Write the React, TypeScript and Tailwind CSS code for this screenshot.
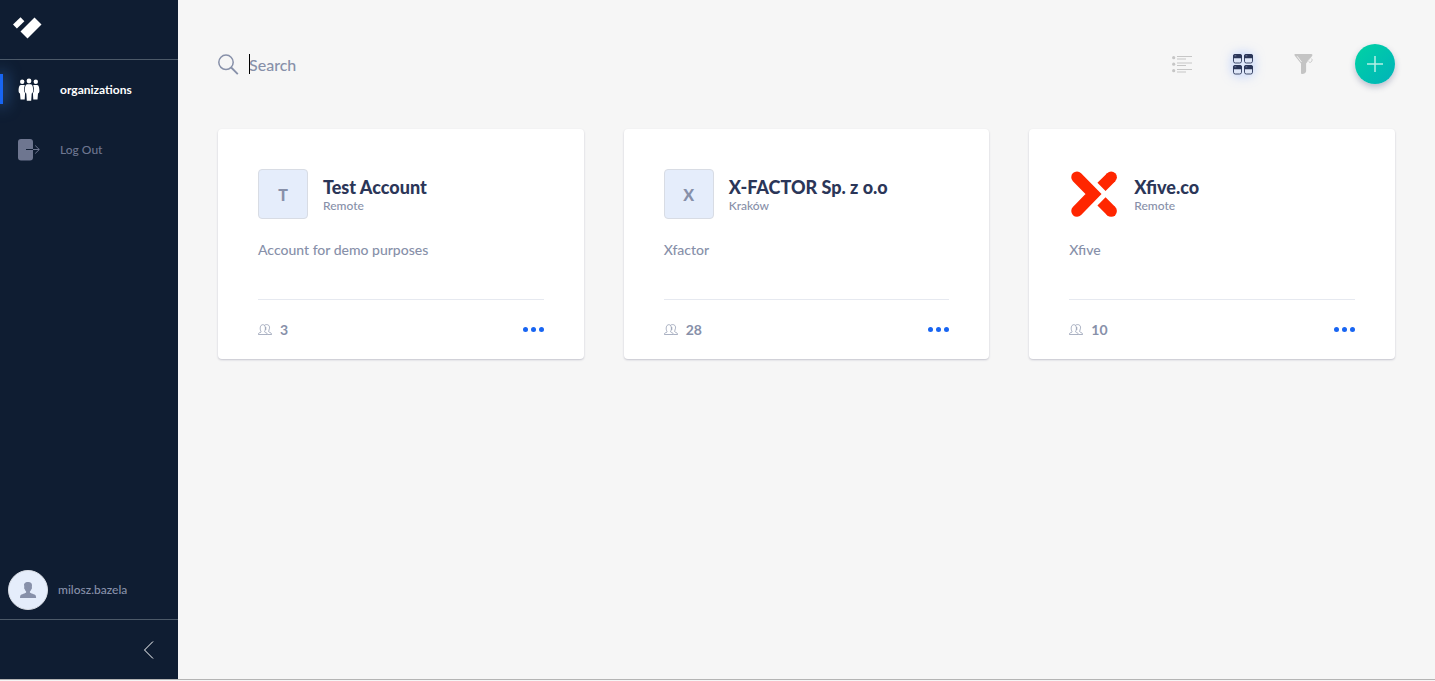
import type { ReactNode } from "react";

type Organization = {
  name: string;
  location: string;
  description: string;
  members: number;
  logo?: ReactNode;
};

function BrandIcon() {
  return (
    <svg width="30" height="24" viewBox="0 0 30 24" fill="#fff" aria-hidden="true">
      <path d="M1 8.500 8.500 1.300l3.900 3.900-7.500 7.200z" />
      <path d="M8.500 15.500 22.500 1.500l7 7L15.500 22.500z" />
    </svg>
  );
}

function PeopleIcon() {
  return (
    <svg width="22" height="24" viewBox="0 0 22 24" fill="currentColor" aria-hidden="true">
      <circle cx="4.200" cy="3.800" r="2.200" />
      <circle cx="17.800" cy="3.800" r="2.200" />
      <circle cx="11" cy="3" r="2.400" />
      <path d="M2.800 6.900h3.500c.4 0 .6.200.5.600-.8 1.800-.9 4.500-.4 6.400.2.500.5.700.7 1l-.4 6.700H2.500L2 15.500C.8 15 .5 13.700.6 12.300c.1-2.600.6-5.400 2.200-5.400z" />
      <path d="M19.200 6.900h-3.500c-.4 0-.6.200-.5.600.8 1.800.9 4.500.4 6.400-.2.500-.5.700-.7 1l.4 6.700h4.200l.5-6.100c1.200-.5 1.500-1.800 1.400-3.200-.1-2.600-.6-5.400-2.200-5.400z" />
      <path d="M9.300 6.200h3.400c1.900 0 2.500 3.600 2.500 6 0 1.500-.5 2.800-1.500 3.300l-.5 7.200H8.800l-.5-7.200c-1-.5-1.500-1.800-1.500-3.300 0-2.400.6-6 2.500-6z" />
    </svg>
  );
}

function LogOutIcon() {
  return (
    <svg width="22" height="22" viewBox="0 0 22 22" fill="none" aria-hidden="true">
      <rect width="15" height="21.500" rx="3" fill="#6e7690" />
      <path d="M8 10.500h7.500" stroke="#0f1d32" strokeWidth="1" />
      <path d="M15 10.500h6.200M17.200 6.500l4.100 4-4.100 4" stroke="#6e7690" strokeWidth="1" />
    </svg>
  );
}

function UserIcon() {
  return (
    <svg width="18" height="18" viewBox="0 0 18 18" fill="#8790a9" aria-hidden="true">
      <path d="M5 3.200C5.700 1.500 7.200 1 9 1c2.500-.2 4.200 1.200 4 3.500l-.2 1.700c.5.500.1 1.600-.4 2-.3 1-.9 1.700-1.500 2.200v1.200c.2.700 5.200 1.700 5.800 2.900.3.700.4 1.600.4 2.500H1c0-.9.100-1.800.4-2.500.6-1.200 5.500-2.200 5.700-2.900v-1.200C6.500 9.900 6 9.200 5.700 8.200c-.5-.4-.9-1.500-.4-2z" />
    </svg>
  );
}

function ChevronIcon() {
  return (
    <svg width="11" height="20" viewBox="0 0 11 20" fill="none" stroke="#fff" strokeWidth="1" aria-hidden="true">
      <path d="M10 1.500 1.500 10l8.500 8.500" />
    </svg>
  );
}

function SearchIcon() {
  return (
    <svg width="21" height="21" viewBox="0 0 21 21" fill="none" stroke="#8790a9" strokeWidth="1.500" aria-hidden="true">
      <circle cx="8" cy="8.300" r="7.200" />
      <path d="m13.200 13.500 6.600 6.600" strokeWidth="1.800" />
    </svg>
  );
}

function ListIcon() {
  return (
    <svg width="20" height="20" viewBox="0 0 20 20" fill="#c6c6c6" aria-hidden="true">
      {[2, 8.500, 15].map((y) => (
        <g key={y} transform={`translate(0 ${y})`}>
          <circle cx="1.700" cy="1.700" r="1.600" />
          <path d="M5 0h15v1H5zM5 2.500h9v1H5z" />
        </g>
      ))}
    </svg>
  );
}

function GridIcon() {
  return (
    <svg width="20" height="21" viewBox="0 0 20 21" aria-hidden="true">
      {[
        [0, 0],
        [11, 0],
        [0, 11],
        [11, 11],
      ].map(([x, y]) => (
        <g key={`${x}-${y}`} transform={`translate(${x} ${y})`}>
          <rect x=".5" y=".5" width="8" height="8.500" rx="1.800" fill="#dfe7f8" stroke="#3d4869" />
          <path d="M0 4.300V2.200C0 .9.900 0 2.200 0h4.600C8.100 0 9 .9 9 2.200v2.100z" fill="#2b3658" />
          <path d="M1.500 1.800h1.800" stroke="#8f9cc0" strokeWidth=".7" />
        </g>
      ))}
    </svg>
  );
}

function FilterIcon() {
  return (
    <svg width="20" height="20" viewBox="0 0 20 20" fill="#c4c4c4" aria-hidden="true">
      <path d="M1.200 0h16c1.200 0 1.600 1 .9 1.900l-6 7.500v7.800c0 1.300-2 2.800-3.800 2.800-.9 0-1.300-.5-1.300-1.300V9.500L.8 1.700C.1.800.3 0 1.200 0z" />
      <path d="m3.200 2.300 4.300 5.700" stroke="#f6f6f6" strokeWidth=".9" fill="none" />
      <path d="M14.800 7.500c.4 1.100 1.600 1.200 2.400.4.900-.9 1.300-2.500.4-3.200" stroke="#c4c4c4" strokeWidth=".9" fill="none" />
      <path d="m13.600 7.500 2.400-3" stroke="#e4e4e4" strokeWidth=".9" fill="none" />
    </svg>
  );
}

function MembersIcon() {
  return (
    <svg width="14" height="12" viewBox="0 0 14 12" fill="none" stroke="#8790a9" strokeWidth=".7" aria-hidden="true">
      <path d="M.4 10.500c0-1.200.4-1.600 1.600-1.900 1.100-.3 1.300-.6.800-1.500C1.700 5 2 .7 4.800.7S7.900 5 6.800 7.100c-.4.900-.1 1.200.8 1.500 1.200.3 1.700.7 1.700 1.900z" />
      <path d="M6.500 1.200C9-.3 12 1 11.500 4.200 11.300 5.700 10.500 6.600 10.700 7.600c.3 1.100 2.900.6 2.900 2.900H9.500M7.800 3v3" />
    </svg>
  );
}

function XfiveLogo() {
  return (
    <svg className="size-[50px]" viewBox="0 0 50 50" fill="none" stroke="#ff2600" strokeWidth="11.500" role="img" aria-label="Xfive.co">
      <path d="M8 8.200 24.500 25 8 42" strokeLinecap="round" />
      <circle cx="42.200" cy="8.200" r="5.700" fill="#ff2600" stroke="none" />
      <circle cx="42.200" cy="42.100" r="5.700" fill="#ff2600" stroke="none" />
      <path d="m42.200 8.200-9.700 9.700M42.200 42.100l-9.700-9.700" />
    </svg>
  );
}

const organizations: Organization[] = [
  { name: "Test Account", location: "Remote", description: "Account for demo purposes", members: 3 },
  { name: "X-FACTOR Sp. z o.o", location: "Kraków", description: "Xfactor", members: 28 },
  { name: "Xfive.co", location: "Remote", description: "Xfive", members: 10, logo: <XfiveLogo /> },
];

function Sidebar() {
  return (
    <aside className="flex w-[178px] shrink-0 flex-col bg-[#0f1d32] text-xs">
      <a href="#" aria-label="Home" className="flex h-[60px] items-center border-b border-[#4c5968] px-3 pb-1">
        <BrandIcon />
      </a>
      <nav className="flex flex-col">
        <a href="#organizations" className="relative flex h-[60px] items-center gap-5 px-[18px] font-bold text-white">
          <span className="absolute top-[14px] left-0 h-[30px] w-[3px] bg-[#1865f2] shadow-[0_0_15px_2px_rgba(74,144,226,0.6)]" />
          <PeopleIcon />
          organizations
        </a>
        <a href="#logout" className="flex h-[60px] items-center gap-5 px-[18px] font-medium text-[#6e7690]">
          <LogOutIcon />
          Log Out
        </a>
      </nav>
      <div className="mt-auto flex h-[60px] items-center gap-[10px] border-b border-[#4c5968] px-2 font-medium text-[#8790a9]">
        <span className="flex size-10 items-center justify-center rounded-full border border-[#d8dce4] bg-[#e5edfb]">
          <UserIcon />
        </span>
        milosz.bazela
      </div>
      <button type="button" aria-label="Collapse sidebar" className="flex h-[59px] items-center justify-end px-6">
        <ChevronIcon />
      </button>
    </aside>
  );
}

function Toolbar() {
  return (
    <header className="flex h-10 items-center">
      <label htmlFor="search" className="pr-[10px]">
        <SearchIcon />
      </label>
      <div className="relative flex flex-1 items-center">
        <span className="absolute left-0 h-5 w-px bg-black" />
        <input
          id="search"
          type="text"
          aria-label="Search"
          placeholder="Search"
          className="w-full bg-transparent pt-[2px] text-base font-medium text-[#8790a9] caret-transparent outline-none placeholder:text-[#8790a9]"
        />
      </div>
      <div className="flex items-center gap-[41px]">
        <button type="button" aria-label="List view">
          <ListIcon />
        </button>
        <button type="button" aria-label="Grid view" className="rounded-md bg-[#dfe8fb] shadow-[0_0_10px_2px_rgba(160,190,255,0.5)]">
          <GridIcon />
        </button>
        <button type="button" aria-label="Filter">
          <FilterIcon />
        </button>
        <button
          type="button"
          aria-label="Add organization"
          className="flex size-10 items-center justify-center rounded-full bg-linear-to-br from-[#02d3a3] to-[#04b2b9] shadow-[0_3px_6px_rgba(50,60,110,0.3)]"
        >
          <svg width="16" height="16" viewBox="0 0 16 16" stroke="#b5f0e6" strokeWidth="1.500" aria-hidden="true">
            <path d="M8 0v16M0 8h16" />
          </svg>
        </button>
      </div>
    </header>
  );
}

function OrganizationCard({ organization }: { organization: Organization }) {
  const { name, location, description, members, logo } = organization;

  return (
    <article className="rounded bg-white px-10 pt-10 shadow-[0_1px_2px_rgba(50,50,93,0.25)]">
      <div className="flex gap-[15px]">
        {logo ?? (
          <span className="flex size-[50px] shrink-0 items-center justify-center rounded border border-[#d8dce4] bg-[#e5edfb] pt-[2px] text-base font-black text-[#8790a9]">
            {name[0]}
          </span>
        )}
        <div className="pt-2">
          <h2 className="text-lg leading-5 font-black text-[#2b3658]">{name}</h2>
          <p className="text-xs leading-[18px] font-medium text-[#8790a9]">{location}</p>
        </div>
      </div>
      <p className="mt-5 h-[60px] text-sm leading-[22px] font-medium text-[#8790a9]">{description}</p>
      <div className="flex h-[60px] items-center border-t border-[#e6e9f0] text-[#8790a9]">
        <MembersIcon />
        <span className="pl-2 text-sm font-bold">{members}</span>
        <button type="button" aria-label={`Options for ${name}`} className="ml-auto flex gap-[3px]">
          <span className="size-[5px] rounded-full bg-[#1865f2]" />
          <span className="size-[5px] rounded-full bg-[#1865f2]" />
          <span className="size-[5px] rounded-full bg-[#1865f2]" />
        </button>
      </div>
    </article>
  );
}

export default function App() {
  return (
    <div className="flex h-screen flex-col bg-[#f6f6f6] font-['Lato',sans-serif]">
      <div className="flex min-h-0 flex-1">
        <Sidebar />
        <main className="flex-1 px-10 pt-11">
          <Toolbar />
          <section className="mt-[45px] grid grid-cols-3 gap-10">
            {organizations.map((organization) => (
              <OrganizationCard key={organization.name} organization={organization} />
            ))}
          </section>
        </main>
      </div>
      <div className="h-[2px] border-t border-[#b4b4b4] bg-[#f6f6f6]" />
    </div>
  );
}
